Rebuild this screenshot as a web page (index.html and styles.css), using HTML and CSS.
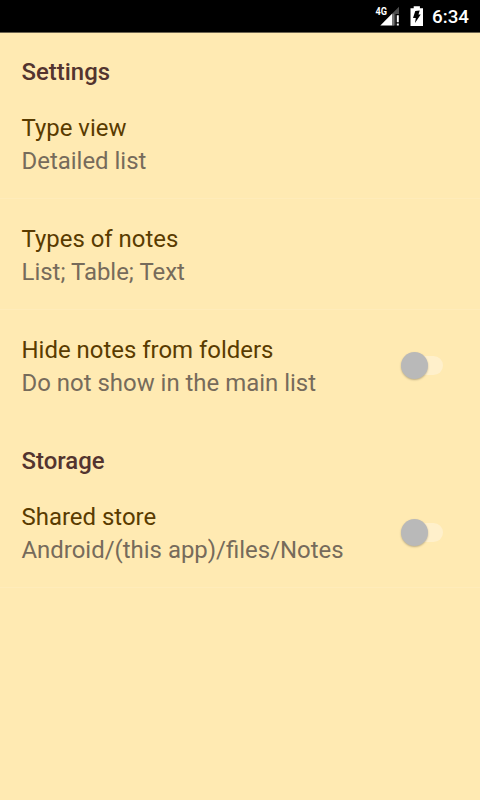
FILE: index.html
```html
<!DOCTYPE html>
<html lang="en">
<head>
    <meta charset="UTF-8">
    <meta name="viewport" content="width=device-width, initial-scale=1.0">
    <title>Settings</title>
    <link rel="stylesheet" href="styles.css">
</head>
<body>
    <div class="status-bar">
        <svg class="signal" width="24" height="20" viewBox="0 0 24 20">
            <path d="M16 7.8L23 0.8v7.2h-3.5v11.6H16z" fill="#4d4d4d"/>
            <path d="M16 7.8h2v11.8h-2z" fill="#777"/>
            <path d="M16 7.8v11.8H4.3z" fill="#fff"/>
            <path d="M20.8 9.3h2v7h-2zM20.8 17.6h2v2h-2z" fill="#fff"/>
            <text class="network" x="-0.5" y="8.8" textLength="11.5" lengthAdjust="spacingAndGlyphs">4G</text>
        </svg>
        <svg class="battery" width="14" height="20" viewBox="0 0 14 20">
            <path d="M3.7 0.3h6.2v2H13V20H0.5V2.3h3.2z" fill="#fff"/>
            <path d="M5.3 5l4.4-.5-1.2 4h2.2L5 17l.8-5H3z" fill="#000"/>
        </svg>
        <div class="clock">6:34</div>
    </div>
    <div class="settings">
        <h2>Settings</h2>
        <div class="item">
            <div class="text">
                <div class="title">Type view</div>
                <div class="summary">Detailed list</div>
            </div>
        </div>
        <div class="item">
            <div class="text">
                <div class="title">Types of notes</div>
                <div class="summary">List; Table; Text</div>
            </div>
        </div>
        <div class="item last">
            <div class="text">
                <div class="title">Hide notes from folders</div>
                <div class="summary">Do not show in the main list</div>
            </div>
            <div class="switch"><div class="thumb"></div></div>
        </div>
        <h2>Storage</h2>
        <div class="item">
            <div class="text">
                <div class="title">Shared store</div>
                <div class="summary">Android/(this app)/files/Notes</div>
            </div>
            <div class="switch"><div class="thumb"></div></div>
        </div>
    </div>
</body>
</html>
```
FILE: styles.css
```css
* {
    box-sizing: border-box;
}
body {
    margin: 0;
    height: 800px;
    background-color: #ffeab2;
    font-family: Roboto, sans-serif;
    overflow: hidden;
}
.status-bar {
    height: 33px;
    padding-right: 11px;
    background-color: #000;
    border-bottom: 1px solid #6b6350;
    display: flex;
    align-items: center;
    justify-content: flex-end;
}
.signal {
    overflow: visible;
}
.signal .network {
    font-size: 11px;
    font-weight: 700;
    fill: #fff;
}
.battery {
    margin-left: 10px;
}
.clock {
    width: 37px;
    margin-left: 8px;
    padding-top: 1px;
    color: #fff;
    font-size: 18.8px;
    font-weight: 500;
}
h2 {
    margin: 0;
    height: 56px;
    padding: 23px 21.5px 0;
    color: #53342f;
    font-size: 23.95px;
    line-height: 32px;
    font-weight: 500;
}
.item {
    height: 110px;
    margin-bottom: 1px;
    padding: 23px 22px 0 21.5px;
    border-bottom: 1px solid #ffecba;
    display: flex;
    justify-content: space-between;
}
.item.last {
    border-bottom: none;
}
.title {
    color: #593b00;
    font-size: 23.95px;
    line-height: 33px;
}
.summary {
    color: #766b5b;
    font-size: 23.95px;
    line-height: 33px;
}
.switch {
    width: 42px;
    height: 19px;
    margin: 21.5px 15px 0 0;
    border-radius: 10px;
    background-color: #fff0cb;
}
.switch .thumb {
    width: 27px;
    height: 27px;
    margin: -4px 0 0 0;
    border-radius: 50%;
    background-color: #b9b9b9;
    box-shadow: 0 1px 2px rgba(0, 0, 0, 0.25);
}
```
